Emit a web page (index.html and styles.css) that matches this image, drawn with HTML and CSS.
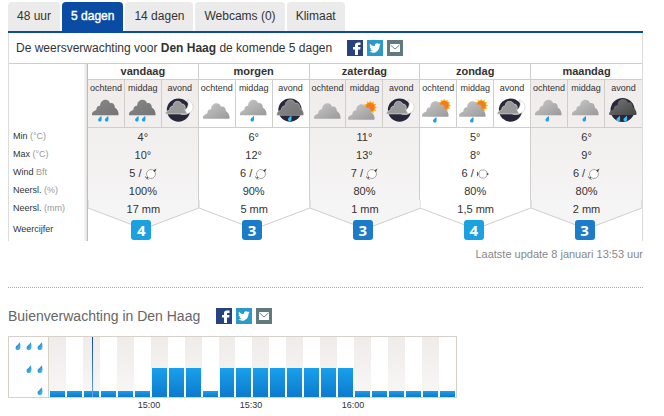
FILE: index.html
```html
<!DOCTYPE html>
<html lang="nl">
<head>
  <meta charset="UTF-8">
  <title>Weer Den Haag | 5 dagen</title>
  <link rel="stylesheet" href="styles.css">
</head>
<body>
  <!-- Shared icons -->
  <svg class="defs" width="0" height="0" aria-hidden="true">
    <defs>
      <linearGradient id="grey" x1="0" y1="0" x2="1" y2="1"><stop offset="0" stop-color="#c9c9c9"/><stop offset="1" stop-color="#999"/></linearGradient>
      <linearGradient id="dark" x1="0" y1="0" x2="1" y2="1"><stop offset="0" stop-color="#888"/><stop offset="1" stop-color="#747474"/></linearGradient>
      <linearGradient id="night" x1="0" y1="0" x2="1" y2="1"><stop offset="0" stop-color="#777"/><stop offset="1" stop-color="#444"/></linearGradient>
      <linearGradient id="water" x1="0" y1="0" x2="1" y2="1"><stop offset="0" stop-color="#1478c4"/><stop offset="1" stop-color="#4fc4f4"/></linearGradient>
      <path id="cloud" d="M0 15C0 12.500 2 11.500 4.500 10.500C4.500 7.500 6.500 6 8.500 6.200C8.500 2.500 11 0 14 0C16.500 0 18.200 1.600 18.800 3.600C21.500 2.700 23.600 4.500 23.600 8C26 9.500 27.500 12 27.500 15Q27.500 16 26.500 16H1Q0 16 0 15Z"/>
      <path id="drop" d="M3.600 0C4.200 2 4.300 3.500 3.900 4.700C3.300 6.500 .3 6.300 .4 4.100C.5 2.600 2.600 1.800 3.600 0Z"/>
      <g id="sun"><path d="M26.500 1L28 3.800L31 2.300L31.100 5.500L34.300 5.600L32.800 8.400L35.500 10L32.800 11.600L34.300 14.500L31.100 14.600L31 17.700L28 16.200L26.500 19L24.900 16.200L22 17.700L21.900 14.600L18.700 14.500L20.200 11.600L17.500 10L20.200 8.400L18.700 5.600L21.900 5.500L22 2.300L24.900 3.800Z" fill="#f9b21c" transform="translate(4.300 2.500) scale(.78)"/><circle cx="25" cy="10" r="4.500" fill="#f47c1c"/></g>

      <symbol id="rain2" viewBox="0 0 37 30"><use href="#cloud" x="4" y="3.500" fill="url(#dark)"/><use href="#drop" x="10" y="20" fill="#239fe0"/><use href="#drop" x="17" y="20" fill="#239fe0"/></symbol>
      <symbol id="rain1" viewBox="0 0 37 30"><use href="#cloud" x="4" y="3.500" fill="url(#grey)"/><use href="#drop" x="14.500" y="20" fill="#239fe0"/></symbol>
      <symbol id="cloudy" viewBox="0 0 37 30"><use href="#cloud" x="4" y="7" fill="url(#grey)"/></symbol>
      <symbol id="sunny" viewBox="0 0 37 30"><use href="#sun" y="1"/><use href="#cloud" x="2" y="8" fill="url(#grey)"/></symbol>
      <symbol id="sunrain" viewBox="0 0 37 30"><use href="#sun" y="-1"/><use href="#cloud" x="2" y="5" fill="url(#grey)"/><use href="#drop" x="13" y="21" fill="#239fe0"/></symbol>
      <symbol id="moon" viewBox="0 0 37 30"><circle cx="17" cy="14" r="12" fill="#28263a"/><path d="M26 3.500C34 6 34.500 17 24 18.500C20 19 18 18 17.500 16C23 16 29.500 11 26 3.500Z" fill="#fff" stroke="#bbb" stroke-width=".5"/><path d="M3.500 18C3.500 16 5.500 14.500 8 14C7.500 11.500 9.500 9.500 11.500 10C11.500 6.500 13.500 5 16 5C18.500 5 20 6.500 20.500 8C22.500 7.500 24 9 24 11.500C23 14 25 16 26 18Z" fill="#999" stroke="#e2e2e2" stroke-width=".6"/></symbol>
      <symbol id="nightrain" viewBox="0 0 37 30"><circle cx="17.500" cy="14" r="12" fill="#28263a"/><use href="#cloud" x="4" y="3.500" fill="url(#dark)" stroke="#ccc" stroke-width=".5"/><use href="#drop" x="15" y="19.500" fill="#3dbdf5"/></symbol>
      <symbol id="nightstorm" viewBox="0 0 37 30"><circle cx="17.500" cy="14" r="12" fill="#28263a"/><use href="#cloud" x="4" y="3" fill="url(#night)"/><use href="#drop" x="11" y="19.500" fill="#3dbdf5"/><use href="#drop" x="18" y="19.500" fill="#3dbdf5"/></symbol>

      <symbol id="wind" viewBox="0 0 14 14"><circle cx="7" cy="7" r="5.200" fill="#fff" stroke="#999"/><path d="M9.500 3L13.500 .5L11.500 5Z" fill="#444"/><path d="M3.500 10.500L2 12M0 10L4 13.500" stroke="#444" fill="none"/></symbol>
      <symbol id="wind-e" viewBox="0 0 14 14"><circle cx="7" cy="7" r="4.800" fill="#fff" stroke="#999"/><path d="M11.500 5.500L14 7L11.500 8.500Z" fill="#444"/><path d="M.5 4.500V9.500M0 7H2" stroke="#444" fill="none"/></symbol>

      <symbol id="fb" viewBox="0 0 16 16"><path fill="#26427f" d="M0 0H16V16H0Z"/><path fill="#fff" d="M8 15V9.500H6V7H8V5.500C8 3.500 9.200 2.600 11 2.600H13.500V5H12C11.200 5 11 5.300 11 6V7H13.500L13.200 9.500H11V15Z"/></symbol>
      <symbol id="tw" viewBox="0 0 16 16"><path fill="#2a9acb" d="M0 0H16V16H0Z"/><path fill="#fff" d="M13.600 4.300C13.200 4.500 12.800 4.700 12.400 4.800C12.900 4.500 13.200 4.100 13.300 3.600C12.900 3.800 12.400 4 11.900 4.100C10.200 2.400 7.400 3.900 7.800 6.100C5.900 6 4.200 5.100 3 3.700C2.300 4.800 2.700 6.200 3.700 6.900L2.600 6.600C2.600 7.800 3.400 8.800 4.500 9H3.500C3.800 9.900 4.600 10.600 5.600 10.600C4.700 11.300 3.500 11.700 2.300 11.600C7.200 14.600 12.700 11.200 12.500 5.700C12.900 5.300 13.300 4.900 13.600 4.300Z"/></symbol>
      <symbol id="mail" viewBox="0 0 16 16"><path fill="#617a7d" d="M0 0H16V16H0Z"/><path fill="#fff" d="M3 4H13V12H3Z"/><path fill="none" stroke="#617a7d" d="M3.500 5L8 9L12.500 5" stroke-width=".9"/></symbol>
    </defs>
  </svg>

  <nav class="tabs">
    <a href="#48uur">48 uur</a>
    <a href="#5dagen" class="active">5 dagen</a>
    <a href="#14dagen">14 dagen</a>
    <a href="#webcams">Webcams (0)</a>
    <a href="#klimaat">Klimaat</a>
  </nav>

  <section class="forecast">
    <header class="bar">
      <span>De weersverwachting voor <b>Den Haag</b> de komende 5 dagen</span>
      <span class="social">
        <a href="#fb" aria-label="Facebook"><svg><use href="#fb"/></svg></a>
        <a href="#tw" aria-label="Twitter"><svg><use href="#tw"/></svg></a>
        <a href="#mail" aria-label="E-mail"><svg><use href="#mail"/></svg></a>
      </span>
    </header>

    <table>
      <colgroup><col class="labels"></colgroup>
      <colgroup class="shade" span="3"></colgroup>
      <colgroup span="3"></colgroup>
      <colgroup class="shade" span="3"></colgroup>
      <colgroup span="3"></colgroup>
      <colgroup class="shade" span="3"></colgroup>
      <tr class="days">
        <td></td>
        <th colspan="3">vandaag</th>
        <th colspan="3">morgen</th>
        <th colspan="3">zaterdag</th>
        <th colspan="3">zondag</th>
        <th colspan="3">maandag</th>
      </tr>
      <tr class="parts">
        <td></td>
        <td>ochtend<svg><use href="#rain2"/></svg></td>
        <td>middag<svg><use href="#rain2"/></svg></td>
        <td>avond<svg><use href="#moon"/></svg></td>
        <td>ochtend<svg><use href="#cloudy"/></svg></td>
        <td>middag<svg><use href="#rain1"/></svg></td>
        <td>avond<svg><use href="#nightrain"/></svg></td>
        <td>ochtend<svg><use href="#cloudy"/></svg></td>
        <td>middag<svg><use href="#sunny"/></svg></td>
        <td>avond<svg><use href="#moon"/></svg></td>
        <td>ochtend<svg><use href="#sunrain"/></svg></td>
        <td>middag<svg><use href="#sunrain"/></svg></td>
        <td>avond<svg><use href="#moon"/></svg></td>
        <td>ochtend<svg><use href="#rain1"/></svg></td>
        <td>middag<svg><use href="#rain1"/></svg></td>
        <td>avond<svg><use href="#nightstorm"/></svg></td>
      </tr>
      <tr class="data">
        <th>Min <i>(°C)</i></th>
        <td colspan="3">4°</td><td colspan="3">6°</td><td colspan="3">11°</td><td colspan="3">5°</td><td colspan="3">6°</td>
      </tr>
      <tr class="data">
        <th>Max <i>(°C)</i></th>
        <td colspan="3">10°</td><td colspan="3">12°</td><td colspan="3">13°</td><td colspan="3">8°</td><td colspan="3">9°</td>
      </tr>
      <tr class="data">
        <th>Wind <i>Bft</i></th>
        <td colspan="3">5 / <svg><use href="#wind"/></svg></td>
        <td colspan="3">6 / <svg><use href="#wind"/></svg></td>
        <td colspan="3">7 / <svg><use href="#wind"/></svg></td>
        <td colspan="3">6 / <svg><use href="#wind-e"/></svg></td>
        <td colspan="3">6 / <svg><use href="#wind"/></svg></td>
      </tr>
      <tr class="data">
        <th>Neersl. <i>(%)</i></th>
        <td colspan="3">100%</td><td colspan="3">90%</td><td colspan="3">80%</td><td colspan="3">80%</td><td colspan="3">80%</td>
      </tr>
      <tr class="data last">
        <th>Neersl. <i>(mm)</i></th>
        <td colspan="3">17 mm</td><td colspan="3">5 mm</td><td colspan="3">1 mm</td><td colspan="3">1,5 mm</td><td colspan="3">2 mm</td>
      </tr>
      <tr class="score">
        <th>Weercijfer</th>
        <td colspan="3"><svg class="point grey" viewBox="0 0 111 41" preserveAspectRatio="none"><path d="M0 0V8L55.500 29L111 8V0"/></svg><b class="four">4</b></td>
        <td colspan="3"><svg class="point" viewBox="0 0 111 41" preserveAspectRatio="none"><path d="M0 0V8L55.500 29L111 8V0"/></svg><b>3</b></td>
        <td colspan="3"><svg class="point grey" viewBox="0 0 111 41" preserveAspectRatio="none"><path d="M0 0V8L55.500 29L111 8V0"/></svg><b>3</b></td>
        <td colspan="3"><svg class="point" viewBox="0 0 111 41" preserveAspectRatio="none"><path d="M0 0V8L55.500 29L111 8V0"/></svg><b class="four">4</b></td>
        <td colspan="3"><svg class="point grey" viewBox="0 0 111 41" preserveAspectRatio="none"><path d="M0 0V8L55.500 29L111 8V0"/></svg><b>3</b></td>
      </tr>
    </table>
  </section>
  <p class="update">Laatste update 8 januari 13:53 uur</p>

  <section class="showers">
    <header>
      <h2>Buienverwachting in Den Haag</h2>
      <span class="social">
        <a href="#fb" aria-label="Facebook"><svg><use href="#fb"/></svg></a>
        <a href="#tw" aria-label="Twitter"><svg><use href="#tw"/></svg></a>
        <a href="#mail" aria-label="E-mail"><svg><use href="#mail"/></svg></a>
      </span>
    </header>

    <div class="chart">
      <div class="scale">
        <div><svg viewBox="0 0 4.500 6.500"><use href="#drop"/></svg><svg viewBox="0 0 4.500 6.500"><use href="#drop"/></svg><svg viewBox="0 0 4.500 6.500"><use href="#drop"/></svg></div>
        <div><svg viewBox="0 0 4.500 6.500"><use href="#drop"/></svg><svg viewBox="0 0 4.500 6.500"><use href="#drop"/></svg></div>
        <div><svg viewBox="0 0 4.500 6.500"><use href="#drop"/></svg></div>
      </div>
      <div class="bars">
        <div><span style="height:10%"></span></div>
        <div><span style="height:10%"></span></div>
        <div><span style="height:10%"></span></div>
        <div><span style="height:10%"></span></div>
        <div><span style="height:10%"></span></div>
        <div><span style="height:10%"></span></div>
        <div><span style="height:48%"></span></div>
        <div><span style="height:48%"></span></div>
        <div><span style="height:48%"></span></div>
        <div><span style="height:10%"></span></div>
        <div><span style="height:48%"></span></div>
        <div><span style="height:48%"></span></div>
        <div><span style="height:48%"></span></div>
        <div><span style="height:48%"></span></div>
        <div><span style="height:48%"></span></div>
        <div><span style="height:48%"></span></div>
        <div><span style="height:48%"></span></div>
        <div><span style="height:48%"></span></div>
        <div><span style="height:10%"></span></div>
        <div><span style="height:10%"></span></div>
        <div><span style="height:10%"></span></div>
        <div><span style="height:10%"></span></div>
        <div><span style="height:10%"></span></div>
        <div><span style="height:10%"></span></div>
        <i class="now"></i>
      </div>
    </div>
    <div class="times"><span>15:00</span><span>15:30</span><span>16:00</span></div>
  </section>
</body>
</html>
```

FILE: styles.css
```css
body {
  margin: 2px 21px 0 8px;
  font-family: "Liberation Sans", Arial, sans-serif;
  font-size: 12px;
  color: #333;
  background: #fff;
}

.defs {
  position: absolute;
}

/* tabs */
.tabs {
  display: flex;
  gap: 2px;
  border-bottom: 2px solid #0a4ba3;
}

.tabs a {
  padding: 0 9px;
  line-height: 29px;
  color: #333;
  background: #ebebeb;
  border-radius: 4px 4px 0 0;
  text-decoration: none;
}

.tabs .active {
  background: #0a4ba3;
  color: #fff;
  -webkit-text-stroke: 0.4px #fff;
}

/* 5 day forecast */
.forecast {
  border: solid #dcdcdc;
  border-width: 0 1px;
}

.bar {
  display: flex;
  align-items: center;
  gap: 15px;
  height: 30px;
  padding-left: 7px;
  border-bottom: 1px solid #d0cecb;
}

.social {
  display: flex;
  gap: 4px;
}

.social svg {
  display: block;
  width: 16px;
  height: 16px;
}

table {
  width: 100%;
  table-layout: fixed;
  border-spacing: 0;
  isolation: isolate;
}

.labels {
  width: 79px;
}

.shade {
  background: linear-gradient(#fff 16px, #efecea 16px, #f5f4f4 136px, transparent 136px);
}

th,
td {
  padding: 0;
  text-align: center;
  border-right: 1px solid #d0cecb;
}

tr > :last-child {
  border-right: 0;
}

tr > :first-child {
  background: linear-gradient(to left, #e4e2e0, #fff 4px);
  border-right-color: #bbb;
}

.days > * {
  height: 15px;
  font-size: 11px;
  line-height: 15px;
  border-bottom: 1px solid #d0cecb;
}

.parts > * {
  height: 47px;
  font-size: 9px;
  line-height: 16px;
  vertical-align: top;
  border-bottom: 1px solid #d0cecb;
}

.days > :first-child,
.parts > :first-child {
  border-bottom: 0;
}

.parts svg {
  display: block;
  width: 100%;
  height: 30px;
}

.data > * {
  height: 18px;
  font-size: 11px;
  line-height: 18px;
}

.data svg {
  display: inline-block;
  width: 12px;
  height: 12px;
  vertical-align: middle;
}

.data th,
.score th {
  padding: 0 0 2px 4px;
  height: 16px;
  font-size: 9px;
  font-weight: normal;
  line-height: 16px;
  text-align: left;
  white-space: nowrap;
}

th i {
  color: #999;
  font-style: normal;
}

.last td,
.score td {
  border-right: 0;
}

.score td {
  position: relative;
  height: 23px;
  padding-right: 4px;
}

/* pointed end of a day column, drawn behind the last two rows */
.point {
  position: absolute;
  z-index: -1;
  left: 0;
  bottom: 0;
  width: 100%;
  height: 41px;
  fill: none;
  stroke: #d0cecb;
}

.grey {
  fill: #f6f5f5;
}

.score b {
  display: block;
  width: 20px;
  margin: 0 auto;
  border-radius: 3px;
  background: #1c7cc8;
  color: #fff;
  font: bold 15px/20px "Open Sans", sans-serif;
}

.score .four {
  background: #1ba1e0;
}

.update {
  margin: 5px 0 0;
  font-size: 11px;
  line-height: 16px;
  color: #888;
  text-align: right;
}

/* shower forecast */
.showers {
  margin-top: 25px;
  border-top: 1px dotted #aaa;
}

.showers header {
  display: flex;
  align-items: center;
  gap: 16px;
  padding: 20px 0 12px;
}

h2 {
  margin: 0;
  font-size: 14px;
  line-height: 16px;
  font-weight: normal;
  color: #666;
}

.chart {
  display: flex;
  width: 447px;
  height: 60px;
  border: 1px solid #d6d1cb;
}

.scale {
  display: flex;
  flex-direction: column;
  justify-content: space-between;
  width: 34px;
  padding: 5px 5px 1px 0;
  border-right: 1px solid #d6d1cb;
}

.scale div {
  display: flex;
  justify-content: flex-end;
  gap: 5px;
}

.scale svg {
  width: 6px;
  height: 9px;
  fill: url(#water);
}

.bars {
  position: relative;
  display: flex;
  flex: 1;
}

.bars div {
  display: flex;
  flex: 1;
  align-items: flex-end;
  padding: 0 1px;
}

.bars div:nth-child(odd) {
  background: linear-gradient(#efecea, #f8f7f7);
}

.bars span {
  flex: 1;
  background: linear-gradient(#18a0ec, #0e7acc);
}

.now {
  position: absolute;
  left: 43px;
  width: 1px;
  height: 100%;
  background: linear-gradient(#0a4ba3, #6aa4f0);
}

.times {
  display: flex;
  padding: 2px 0 0 90px;
  font-size: 9px;
  line-height: 11px;
}

.times span {
  width: 102px;
  text-align: center;
}
```
